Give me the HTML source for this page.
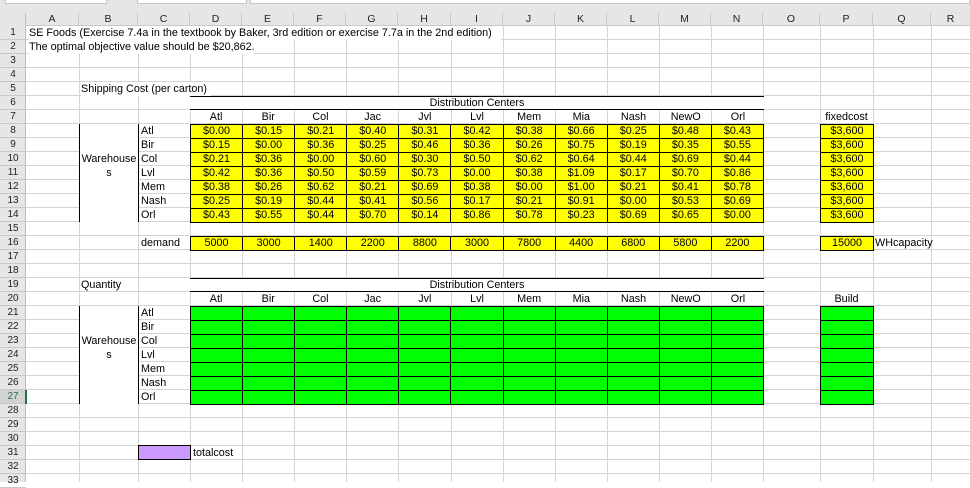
<!DOCTYPE html>
<html><head><meta charset="utf-8"><style>
*{margin:0;padding:0;box-sizing:border-box}
body{width:970px;height:482px;overflow:hidden;background:#fff;font-family:"Liberation Sans",Tahoma,sans-serif;font-size:10.8px;color:#000;position:relative}
.a{position:absolute}
.t{position:absolute;height:14px;line-height:14px;white-space:nowrap}
.c{text-align:center}
.vl{position:absolute;top:26px;width:1px;height:456px;background:#d4d4d4}
.g{position:absolute;background:#000;padding:1px;display:grid;gap:1px}
.g div{height:13px;line-height:13px;text-align:center}
.y div{background:#ffff00}
.gr div{background:#00ff00}
.ch{position:absolute;top:13px;height:13px;line-height:13px;text-align:center;border-right:1px solid #c8c8c8;color:#222;font-size:10.5px}
.rh{position:absolute;left:0;width:26px;height:14px;line-height:14px;text-align:center;border-bottom:1px solid #c8c8c8;font-size:10px;color:#222}
</style></head><body>
<div class="a" style="left:0;top:0;width:970px;height:13px;background:#e6e6e6"></div>
<div class="a" style="left:5px;top:0;width:102px;height:4px;background:#fff;border:1px solid #c8c8c8;border-top:none"></div>
<div class="a" style="left:137px;top:0;width:110px;height:4px;background:#fff;border:1px solid #c8c8c8;border-top:none"></div>
<div class="a" style="left:250px;top:0;width:720px;height:4px;background:#fff;border:1px solid #c8c8c8;border-top:none"></div>
<div class="a" style="left:0;top:13px;width:970px;height:13px;background:#e6e6e6;border-bottom:1px solid #c8c8c8"></div>
<div class="a" style="left:0;top:13px;width:26px;height:469px;background:#e6e6e6;border-right:1px solid #bdbdbd"></div>
<div class="a" style="left:26px;top:26px;width:944px;height:456px;background:repeating-linear-gradient(to bottom,transparent 0 13px,#d4d4d4 13px 14px)"></div>
<div class="vl" style="left:79px"></div><div class="vl" style="left:138px"></div><div class="vl" style="left:190px"></div>
<div class="vl" style="left:242px"></div><div class="vl" style="left:294px"></div><div class="vl" style="left:346px"></div>
<div class="vl" style="left:398px"></div><div class="vl" style="left:451px"></div><div class="vl" style="left:503px"></div>
<div class="vl" style="left:555px"></div><div class="vl" style="left:607px"></div><div class="vl" style="left:659px"></div>
<div class="vl" style="left:711px"></div><div class="vl" style="left:763px"></div><div class="vl" style="left:820px"></div>
<div class="vl" style="left:873px"></div><div class="vl" style="left:931px"></div>
<div class="ch" style="left:26px;width:53px">A</div><div class="ch" style="left:79px;width:59px">B</div>
<div class="ch" style="left:138px;width:52px">C</div><div class="ch" style="left:190px;width:52px">D</div>
<div class="ch" style="left:242px;width:52px">E</div><div class="ch" style="left:294px;width:52px">F</div>
<div class="ch" style="left:346px;width:52px">G</div><div class="ch" style="left:398px;width:53px">H</div>
<div class="ch" style="left:451px;width:52px">I</div><div class="ch" style="left:503px;width:52px">J</div>
<div class="ch" style="left:555px;width:52px">K</div><div class="ch" style="left:607px;width:52px">L</div>
<div class="ch" style="left:659px;width:52px">M</div><div class="ch" style="left:711px;width:52px">N</div>
<div class="ch" style="left:763px;width:57px">O</div><div class="ch" style="left:820px;width:53px">P</div>
<div class="ch" style="left:873px;width:58px">Q</div><div class="ch" style="left:931px;width:39px;border:none">R</div>
<div class="rh" style="top:26px">1</div><div class="rh" style="top:40px">2</div><div class="rh" style="top:54px">3</div>
<div class="rh" style="top:68px">4</div><div class="rh" style="top:82px">5</div><div class="rh" style="top:96px">6</div>
<div class="rh" style="top:110px">7</div><div class="rh" style="top:124px">8</div><div class="rh" style="top:138px">9</div>
<div class="rh" style="top:152px">10</div><div class="rh" style="top:166px">11</div><div class="rh" style="top:180px">12</div>
<div class="rh" style="top:194px">13</div><div class="rh" style="top:208px">14</div><div class="rh" style="top:222px">15</div>
<div class="rh" style="top:236px">16</div><div class="rh" style="top:250px">17</div><div class="rh" style="top:264px">18</div>
<div class="rh" style="top:278px">19</div><div class="rh" style="top:292px">20</div><div class="rh" style="top:306px">21</div>
<div class="rh" style="top:320px">22</div><div class="rh" style="top:334px">23</div><div class="rh" style="top:348px">24</div>
<div class="rh" style="top:362px">25</div><div class="rh" style="top:376px">26</div>
<div class="rh" style="top:390px;background:#d2d2d2;color:#217346">27</div>
<div class="rh" style="top:404px">28</div><div class="rh" style="top:418px">29</div><div class="rh" style="top:432px">30</div>
<div class="rh" style="top:446px">31</div><div class="rh" style="top:460px">32</div><div class="rh" style="top:474px">33</div>
<div class="a" style="left:25px;top:390px;width:2px;height:14px;background:#217346"></div>
<div class="t" style="left:29px;top:26px;background:#fff;width:472px">SE Foods (Exercise 7.4a in the textbook by Baker, 3rd edition or exercise 7.7a in the 2nd edition)</div>
<div class="t" style="left:29px;top:40px;background:#fff;width:225px">The optimal objective value should be $20,862.</div>
<div class="t" style="left:81px;top:82px;background:#fff;width:130px">Shipping Cost (per carton)</div>
<div class="t" style="left:81px;top:278px">Quantity</div>
<div class="a" style="left:190px;top:96px;width:574px;height:14px;background:#fff;border-top:1px solid #000;border-bottom:1px solid #000"></div>
<div class="t c" style="left:190px;top:96px;width:574px">Distribution Centers</div>
<div class="a" style="left:190px;top:278px;width:574px;height:14px;background:#fff;border-top:1px solid #000;border-bottom:1px solid #000"></div>
<div class="t c" style="left:190px;top:278px;width:574px">Distribution Centers</div>
<div class="a" style="left:190px;top:110px;width:574px;display:grid;grid-template-columns:repeat(11,1fr)">
<div class="t c" style="position:static">Atl</div><div class="t c" style="position:static">Bir</div><div class="t c" style="position:static">Col</div><div class="t c" style="position:static">Jac</div><div class="t c" style="position:static">Jvl</div><div class="t c" style="position:static">Lvl</div><div class="t c" style="position:static">Mem</div><div class="t c" style="position:static">Mia</div><div class="t c" style="position:static">Nash</div><div class="t c" style="position:static">NewO</div><div class="t c" style="position:static">Orl</div></div>
<div class="a" style="left:190px;top:292px;width:574px;display:grid;grid-template-columns:repeat(11,1fr)">
<div class="t c" style="position:static">Atl</div><div class="t c" style="position:static">Bir</div><div class="t c" style="position:static">Col</div><div class="t c" style="position:static">Jac</div><div class="t c" style="position:static">Jvl</div><div class="t c" style="position:static">Lvl</div><div class="t c" style="position:static">Mem</div><div class="t c" style="position:static">Mia</div><div class="t c" style="position:static">Nash</div><div class="t c" style="position:static">NewO</div><div class="t c" style="position:static">Orl</div></div>
<div class="t c" style="left:820px;top:110px;width:53px">fixedcost</div>
<div class="t c" style="left:820px;top:292px;width:53px">Build</div>
<div class="a" style="left:79px;top:124px;width:60px;height:98px;border-left:1px solid #000;border-right:1px solid #000;background:#fff"></div>
<div class="t c" style="left:80px;top:152px;width:58px">Warehouse</div>
<div class="t c" style="left:80px;top:166px;width:58px">s</div>
<div class="a" style="left:79px;top:306px;width:60px;height:98px;border-left:1px solid #000;border-right:1px solid #000;background:#fff"></div>
<div class="t c" style="left:80px;top:334px;width:58px">Warehouse</div>
<div class="t c" style="left:80px;top:348px;width:58px">s</div>
<div class="t" style="left:141px;top:124px">Atl</div><div class="t" style="left:141px;top:138px">Bir</div><div class="t" style="left:141px;top:152px">Col</div><div class="t" style="left:141px;top:166px">Lvl</div><div class="t" style="left:141px;top:180px">Mem</div><div class="t" style="left:141px;top:194px">Nash</div><div class="t" style="left:141px;top:208px">Orl</div>
<div class="t" style="left:141px;top:306px">Atl</div><div class="t" style="left:141px;top:320px">Bir</div><div class="t" style="left:141px;top:334px">Col</div><div class="t" style="left:141px;top:348px">Lvl</div><div class="t" style="left:141px;top:362px">Mem</div><div class="t" style="left:141px;top:376px">Nash</div><div class="t" style="left:141px;top:390px">Orl</div>
<div class="g y" style="left:190px;top:124px;width:574px;grid-template-columns:repeat(11,1fr)">
<div>$0.00</div><div>$0.15</div><div>$0.21</div><div>$0.40</div><div>$0.31</div><div>$0.42</div><div>$0.38</div><div>$0.66</div><div>$0.25</div><div>$0.48</div><div>$0.43</div>
<div>$0.15</div><div>$0.00</div><div>$0.36</div><div>$0.25</div><div>$0.46</div><div>$0.36</div><div>$0.26</div><div>$0.75</div><div>$0.19</div><div>$0.35</div><div>$0.55</div>
<div>$0.21</div><div>$0.36</div><div>$0.00</div><div>$0.60</div><div>$0.30</div><div>$0.50</div><div>$0.62</div><div>$0.64</div><div>$0.44</div><div>$0.69</div><div>$0.44</div>
<div>$0.42</div><div>$0.36</div><div>$0.50</div><div>$0.59</div><div>$0.73</div><div>$0.00</div><div>$0.38</div><div>$1.09</div><div>$0.17</div><div>$0.70</div><div>$0.86</div>
<div>$0.38</div><div>$0.26</div><div>$0.62</div><div>$0.21</div><div>$0.69</div><div>$0.38</div><div>$0.00</div><div>$1.00</div><div>$0.21</div><div>$0.41</div><div>$0.78</div>
<div>$0.25</div><div>$0.19</div><div>$0.44</div><div>$0.41</div><div>$0.56</div><div>$0.17</div><div>$0.21</div><div>$0.91</div><div>$0.00</div><div>$0.53</div><div>$0.69</div>
<div>$0.43</div><div>$0.55</div><div>$0.44</div><div>$0.70</div><div>$0.14</div><div>$0.86</div><div>$0.78</div><div>$0.23</div><div>$0.69</div><div>$0.65</div><div>$0.00</div>
</div>
<div class="g y" style="left:820px;top:124px;width:54px;grid-template-columns:1fr">
<div>$3,600</div><div>$3,600</div><div>$3,600</div><div>$3,600</div><div>$3,600</div><div>$3,600</div><div>$3,600</div></div>
<div class="t" style="left:141px;top:236px">demand</div>
<div class="g y" style="left:190px;top:236px;width:574px;grid-template-columns:repeat(11,1fr)">
<div>5000</div><div>3000</div><div>1400</div><div>2200</div><div>8800</div><div>3000</div><div>7800</div><div>4400</div><div>6800</div><div>5800</div><div>2200</div></div>
<div class="g y" style="left:820px;top:236px;width:54px;grid-template-columns:1fr"><div>15000</div></div>
<div class="t" style="left:875px;top:236px">WHcapacity</div>
<div class="g gr" style="left:190px;top:306px;width:574px;grid-template-columns:repeat(11,1fr)">
<div></div><div></div><div></div><div></div><div></div><div></div><div></div><div></div><div></div><div></div><div></div>
<div></div><div></div><div></div><div></div><div></div><div></div><div></div><div></div><div></div><div></div><div></div>
<div></div><div></div><div></div><div></div><div></div><div></div><div></div><div></div><div></div><div></div><div></div>
<div></div><div></div><div></div><div></div><div></div><div></div><div></div><div></div><div></div><div></div><div></div>
<div></div><div></div><div></div><div></div><div></div><div></div><div></div><div></div><div></div><div></div><div></div>
<div></div><div></div><div></div><div></div><div></div><div></div><div></div><div></div><div></div><div></div><div></div>
<div></div><div></div><div></div><div></div><div></div><div></div><div></div><div></div><div></div><div></div><div></div>
</div>
<div class="g gr" style="left:820px;top:306px;width:54px;grid-template-columns:1fr">
<div></div><div></div><div></div><div></div><div></div><div></div><div></div></div>
<div class="a" style="left:138px;top:445px;width:53px;height:15px;background:#cc99ff;border:1px solid #000"></div>
<div class="t" style="left:193px;top:446px">totalcost</div>
</body></html>
